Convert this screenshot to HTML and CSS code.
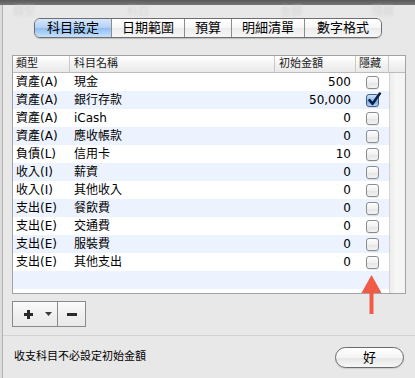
FILE: index.html
```html
<!DOCTYPE html>
<html lang="zh-Hant">
<head>
<meta charset="utf-8">
<link rel="stylesheet" href="styles.css">
</head>
<body>
<div class="window">
  <div class="titlebar"></div>
  <div class="sheet">
    <div class="ghost"><span class="g1">類型</span><span class="g2">科目</span><span class="g3">金額</span><span class="g4">隱藏</span></div>
    <div class="tabs-row">
      <div class="segmented">
        <div class="seg first selected">科目設定</div>
        <div class="seg">日期範圍</div>
        <div class="seg">預算</div>
        <div class="seg">明細清單</div>
        <div class="seg last">數字格式</div>
      </div>
    </div>
    <div class="table">
      <div class="thead">
        <div class="th c-type">類型</div>
        <div class="th c-name">科目名稱</div>
        <div class="th c-amt">初始金額</div>
        <div class="th c-hide">隱藏</div>
        <div class="th c-scroll"></div>
      </div>
      <div class="tbody">
        <div class="rows">
          <div class="row"><div class="td c-type">資產(A)</div><div class="td c-name">現金</div><div class="td c-amt num">500</div><div class="td c-hide"><span class="cb"></span></div></div>
          <div class="row"><div class="td c-type">資產(A)</div><div class="td c-name">銀行存款</div><div class="td c-amt num">50,000</div><div class="td c-hide"><span class="cb on"><svg class="check" width="16" height="16" viewBox="0 0 16 16"><path d="M3.5 8.2 L6.6 11.8 L13.8 1.6" fill="none" stroke="#0d1f45" stroke-width="2.6" stroke-linecap="round" stroke-linejoin="round"/></svg></span></div></div>
          <div class="row"><div class="td c-type">資產(A)</div><div class="td c-name">iCash</div><div class="td c-amt num">0</div><div class="td c-hide"><span class="cb"></span></div></div>
          <div class="row"><div class="td c-type">資產(A)</div><div class="td c-name">應收帳款</div><div class="td c-amt num">0</div><div class="td c-hide"><span class="cb"></span></div></div>
          <div class="row"><div class="td c-type">負債(L)</div><div class="td c-name">信用卡</div><div class="td c-amt num">10</div><div class="td c-hide"><span class="cb"></span></div></div>
          <div class="row"><div class="td c-type">收入(I)</div><div class="td c-name">薪資</div><div class="td c-amt num">0</div><div class="td c-hide"><span class="cb"></span></div></div>
          <div class="row"><div class="td c-type">收入(I)</div><div class="td c-name">其他收入</div><div class="td c-amt num">0</div><div class="td c-hide"><span class="cb"></span></div></div>
          <div class="row"><div class="td c-type">支出(E)</div><div class="td c-name">餐飲費</div><div class="td c-amt num">0</div><div class="td c-hide"><span class="cb"></span></div></div>
          <div class="row"><div class="td c-type">支出(E)</div><div class="td c-name">交通費</div><div class="td c-amt num">0</div><div class="td c-hide"><span class="cb"></span></div></div>
          <div class="row"><div class="td c-type">支出(E)</div><div class="td c-name">服裝費</div><div class="td c-amt num">0</div><div class="td c-hide"><span class="cb"></span></div></div>
          <div class="row"><div class="td c-type">支出(E)</div><div class="td c-name">其他支出</div><div class="td c-amt num">0</div><div class="td c-hide"><span class="cb"></span></div></div>
          <div class="row"></div>
        </div>
        <div class="scroll"></div>
      </div>
    </div>
    <div class="btn-group">
      <div class="btn-add">
        <svg width="9" height="9" viewBox="0 0 9 9"><rect x="3" y="0" width="3" height="9" fill="#2a2a2a"/><rect x="0" y="3" width="9" height="3" fill="#2a2a2a"/></svg>
        <svg class="tri" width="7" height="4" viewBox="0 0 7 4"><polygon points="0,0 7,0 3.5,4" fill="#3a3a3a"/></svg>
      </div>
      <div class="btn-remove">
        <svg width="10" height="3" viewBox="0 0 10 3"><rect x="0" y="0" width="10" height="3" fill="#2a2a2a"/></svg>
      </div>
    </div>
    <div class="separator"></div>
    <div class="footer">
      <span class="note">收支科目不必設定初始金額</span>
      <div class="ok">好</div>
    </div>
  </div>
  <svg class="arrow" width="20" height="40" viewBox="0 0 20 40"><polygon points="10.5,0 20.5,18 0.5,18" fill="#f05a46"/><rect x="8.5" y="17" width="4" height="22" fill="#f05a46"/></svg>
</div>
</body>
</html>
```
FILE: styles.css
```css
* { box-sizing: border-box; }
html, body { margin: 0; padding: 0; }
body {
  width: 415px;
  height: 378px;
  overflow: hidden;
  background: #dcdcdc;
  font-family: "DejaVu Sans", "Noto Sans CJK TC", sans-serif;
  color: #000;
}
.window {
  position: relative;
  width: 415px;
  height: 378px;
  display: flex;
  flex-direction: column;
}
.titlebar {
  flex: none;
  height: 5px;
  background: linear-gradient(#595959, #777777);
}
.sheet {
  flex: 1;
  margin-left: 2px;
  border-left: 1px solid #b2b2b2;
  background: #e8e8e8;
  display: flex;
  flex-direction: column;
}
.ghost {
  flex: none;
  height: 13px;
  display: flex;
  font-size: 11px;
  line-height: 13px;
  color: #d6d6d6;
  filter: blur(0.8px);
}
.ghost .g1 { margin-left: 10px; }
.ghost .g2 { margin-left: 92px; }
.ghost .g3 { margin-left: 131px; }
.ghost .g4 { margin-left: 70px; }

.tabs-row {
  flex: none;
  height: 20px;
  padding-left: 31px;
  display: flex;
}
.segmented {
  display: flex;
  height: 20px;
  border: 1px solid #6e6e6e;
  border-radius: 6px;
  overflow: hidden;
  box-shadow: 0 1px 1px rgba(0, 0, 0, 0.18);
}
.seg {
  padding: 0 10px;
  font-size: 13px;
  line-height: 18px;
  border-left: 1px solid #8c8c8c;
  background: linear-gradient(#ffffff, #f6f6f6 50%, #ebebeb 51%, #f7f7f7);
}
.seg.first { border-left: none; padding-left: 12px; padding-right: 12px; }
.seg.last { padding-left: 12px; padding-right: 12px; }
.seg.selected {
  background: linear-gradient(#d6e7fb, #b1d0f4 50%, #8fbdf1 51%, #c6e1fc);
}

.table {
  flex: none;
  margin: 17px 0 0 9px;
  width: 394px;
  height: 239px;
  border: 1px solid #a3a3a3;
  background: #fff;
  display: flex;
  flex-direction: column;
}
.thead {
  flex: none;
  height: 17px;
  display: flex;
  border-bottom: 1px solid #bcbcbc;
  background: linear-gradient(#ffffff, #f3f3f3 50%, #e9e9e9);
}
.th {
  font-size: 11px;
  line-height: 16px;
  padding-left: 3px;
  border-right: 1px solid #c9c9c9;
  color: #1a1a1a;
  white-space: nowrap;
}
.th.c-name, .th.c-amt { padding-left: 4px; }
.th.c-hide { padding-left: 3px; }
.th.c-scroll { flex: 1; border-right: none; }
.c-type { width: 57px; flex: none; }
.c-name { width: 205px; flex: none; }
.c-amt { width: 81px; flex: none; }
.c-hide { width: 33px; flex: none; }

.tbody {
  flex: 1;
  display: flex;
}
.rows {
  width: 376px;
  flex: none;
}
.scroll {
  flex: 1;
  border-left: 1px solid #d4d4d4;
  background: linear-gradient(to right, #ececec, #f7f7f7 40%, #f4f4f4);
}
.row {
  height: 18px;
  display: flex;
  font-size: 12px;
  line-height: 18px;
}
.row:nth-child(even) { background: #edf3fe; }
.td { white-space: nowrap; }
.td.c-type { padding-left: 3px; }
.td.c-name { padding-left: 4px; }
.td.num { text-align: right; padding-right: 5px; }
.td.c-hide {
  display: flex;
  align-items: center;
  justify-content: center;
}
.cb {
  position: relative;
  display: block;
  width: 13px;
  height: 13px;
  border: 1px solid #8c8c8c;
  border-radius: 3px;
  background: linear-gradient(#fefefe, #f1f1f1 50%, #e4e4e4 51%, #f3f3f3);
  box-shadow: 0 1px 0 rgba(0, 0, 0, 0.08);
}
.cb.on {
  border-color: #3f5f8e;
  background: linear-gradient(#cfe1f7, #8fbbee 50%, #6ea6e8 51%, #b2d4f7);
}
.check {
  position: absolute;
  left: -1px;
  top: -3px;
}

.btn-group {
  flex: none;
  margin: 7px 0 0 9px;
  width: 74px;
  height: 26px;
  display: flex;
  border: 1px solid #8a8a8a;
  background: linear-gradient(#fbfbfb, #f0f0f0 50%, #e9e9e9);
}
.btn-add {
  width: 45px;
  flex: none;
  border-right: 1px solid #8a8a8a;
  display: flex;
  align-items: center;
  padding-left: 11px;
}
.btn-add .tri { margin-left: 12px; margin-top: -1px; }
.btn-remove {
  flex: 1;
  display: flex;
  align-items: center;
  justify-content: center;
}

.separator {
  flex: none;
  margin-top: 8px;
  height: 1px;
  background: #d2d2d2;
}
.footer {
  flex: 1;
  display: flex;
  align-items: center;
  justify-content: space-between;
  padding: 0 11px 0 11px;
}
.note {
  font-size: 11px;
  line-height: 14px;
}
.ok {
  width: 69px;
  height: 21px;
  border: 1px solid #6a6a6a;
  border-radius: 11px;
  background: linear-gradient(#ffffff, #f4f4f4 50%, #e6e6e6 51%, #f7f7f7);
  font-size: 13px;
  line-height: 19px;
  text-align: center;
  box-shadow: 0 1px 1px rgba(0, 0, 0, 0.12);
}
.arrow {
  position: absolute;
  left: 361px;
  top: 275px;
}
```
